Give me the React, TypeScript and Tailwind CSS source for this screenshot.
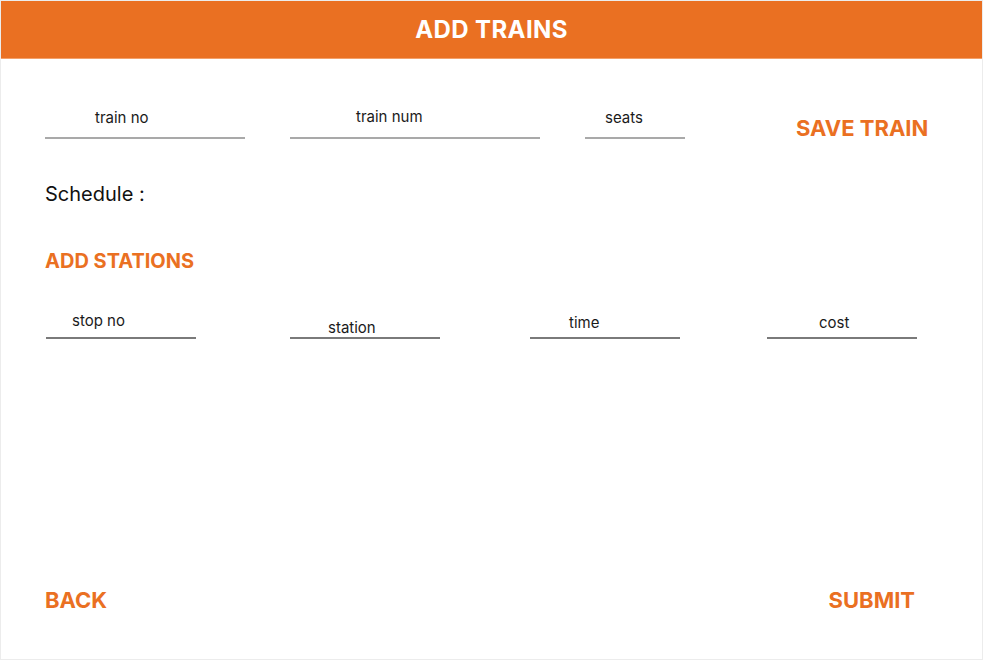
import React from "react";

const font = { fontFamily: "Inter, 'Noto Sans', sans-serif" };

export default function App() {
  return (
    <div className="min-h-screen w-full bg-white flex flex-col border border-[#ececec]" style={font}>
      <div className="h-[58px] bg-[#ea7022] border-b border-[#f3a06a] flex items-center justify-center">
        <h1 className="text-white font-bold text-[24px] tracking-[0.4px]">ADD TRAINS</h1>
      </div>

      <div className="flex flex-col flex-1 pl-[44px] pr-[56px]">
        <div className="flex items-start mt-[51px]">
          <div className="flex flex-col w-[200px] shrink-0">
            <div className="text-[15px] leading-[15px] text-[#1a1a1a] pl-[50px]">train no</div>
            <div className="mt-[12px] h-[2px] bg-[#a9a9a9]" />
          </div>
          <div className="flex flex-col w-[250px] ml-[45px] shrink-0">
            <div className="text-[15px] leading-[15px] text-[#1a1a1a] pl-[66px] -mt-[1px]">train num</div>
            <div className="mt-[13px] h-[2px] bg-[#a9a9a9]" />
          </div>
          <div className="flex flex-col w-[100px] ml-[45px] shrink-0">
            <div className="text-[15px] leading-[15px] text-[#1a1a1a] pl-[20px]">seats</div>
            <div className="mt-[12px] h-[2px] bg-[#a9a9a9]" />
          </div>
          <div className="ml-[111px] mt-[4px] shrink-0 text-[22px] leading-[28px] font-bold text-[#ea7022] whitespace-nowrap">SAVE TRAIN</div>
        </div>

        <div className="mt-[38px] text-[20px] leading-[28px] text-[#111]">Schedule :</div>
        <div className="mt-[39px] text-[20px] leading-[28px] font-bold text-[#ea7022]">ADD STATIONS</div>

        <div className="flex items-end h-[34px] mt-[30px]">
          <div className="flex flex-col w-[150px] ml-[1px] shrink-0">
            <div className="text-[15px] leading-[15px] text-[#1a1a1a] pl-[26px] mb-[9px]">stop no</div>
            <div className="h-[2px] bg-[#7a7a7a]" />
          </div>
          <div className="flex flex-col w-[150px] ml-[94px] shrink-0">
            <div className="text-[15px] leading-[15px] text-[#1a1a1a] pl-[38px] mb-[2px]">station</div>
            <div className="h-[2px] bg-[#7a7a7a]" />
          </div>
          <div className="flex flex-col w-[150px] ml-[90px] shrink-0">
            <div className="text-[15px] leading-[15px] text-[#1a1a1a] pl-[39px] mb-[7px]">time</div>
            <div className="h-[2px] bg-[#7a7a7a]" />
          </div>
          <div className="flex flex-col w-[150px] ml-[87px] shrink-0">
            <div className="text-[15px] leading-[15px] text-[#1a1a1a] pl-[52px] mb-[7px]">cost</div>
            <div className="h-[2px] bg-[#7a7a7a]" />
          </div>
        </div>

        <div className="mt-auto mb-[45px] pr-[11px] flex justify-between items-center">
          <div className="text-[22px] leading-[28px] font-bold text-[#ea7022]">BACK</div>
          <div className="text-[22px] leading-[28px] font-bold text-[#ea7022]">SUBMIT</div>
        </div>
      </div>
    </div>
  );
}
